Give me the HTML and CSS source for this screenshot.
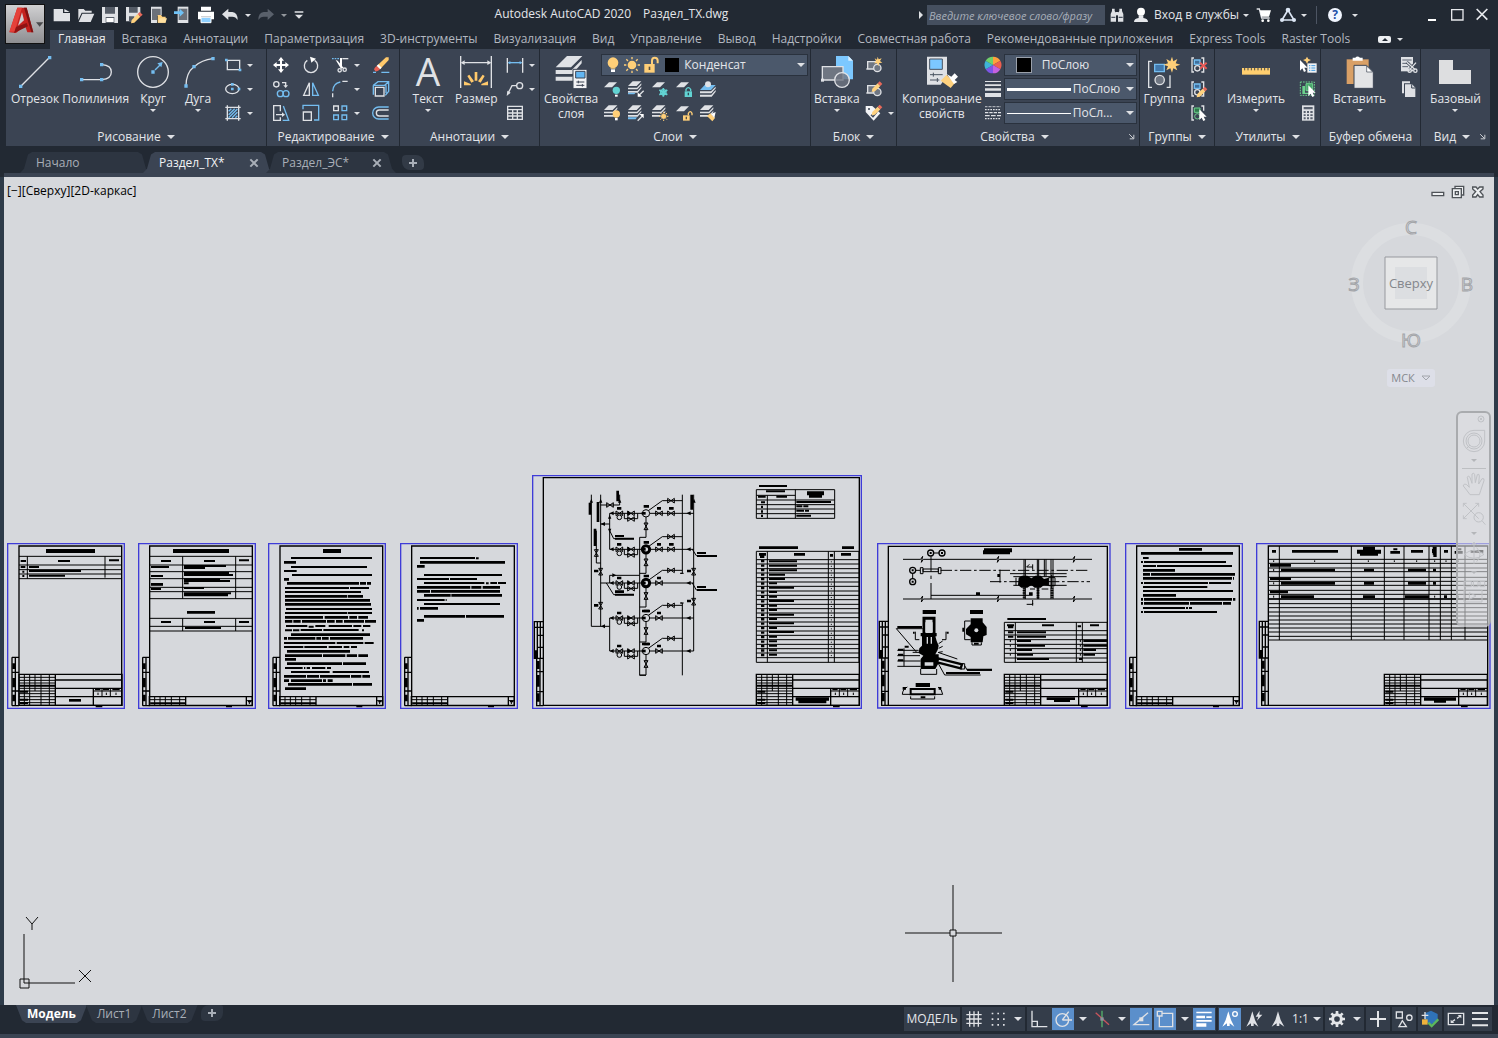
FILE: index.html
```html
<!DOCTYPE html>
<html lang="ru">
<head>
    <meta charset="UTF-8">
    <meta name="viewport" content="width=device-width, initial-scale=1.0">
    <title>Autodesk AutoCAD 2020 Раздел_ТХ.dwg</title>
    <link rel="stylesheet" href="styles.css">
</head>
<body>
    <!-- Shared shapes -->
    <svg class="defs" aria-hidden="true">
        <symbol id="plate" viewBox="0 0 54 54"><path class="fw" d="M3 22L18 7H42L27 22Z"/></symbol>
        <symbol id="stack" viewBox="0 0 54 54"><path class="fw" d="M3 18L17 4H43L29 18ZM3 23H30L43 10V15L31 28H3ZM3 33H31L43 20V25L32 38H3Z"/></symbol>
        <symbol id="cursor" viewBox="0 0 54 54"><path d="M28 16V48L35 41L40 51L46 48L41 38H50Z" fill="#fff"/></symbol>
        <symbol id="group" viewBox="0 0 54 54"><path class="lw" d="M12 6H6V48H12M34 6H41V48H34"/><path class="lb" fill="#3f6f9c" d="M13 12H30V25H13Z"/><circle class="lw" cx="22" cy="37" r="8"/></symbol>
        <symbol id="pencil" viewBox="0 0 54 54"><path fill="#ffd27f" d="M22 30L38 14L46 22L30 38L20 40Z"/><path fill="#e8695a" d="M38 14L44 8L52 16L46 22Z"/></symbol>
        <symbol id="block" viewBox="0 0 54 54"><path class="lw" fill="#6f7682" d="M8 17H38V39H8ZM4 39H10"/><circle class="lw" fill="#6f7682" cx="37" cy="36" r="11"/></symbol>
        <symbol id="title-block" overflow="visible">
            <path class="k4" d="M0 0H309V93H0ZM109 0V93M109 17H309M109 42H309M109 67H309M223 42V93"/>
            <path class="k3" d="M16 0V93M32 0V93M48 0V50M66 0V93M91 0V93M0 9H109M0 18H109M0 26H109M0 42H109M0 50H109M0 58H109M0 67H109M0 76H109M0 85H109M249 42V67M274 42V67M223 50H309M237 55V62M262 55V62M291 55V62"/>
            <path class="k6" d="M0 34H109M3 52H27M3 76H27M3 86H27M228 45H244M252 45H270M280 45H302M230 96H250"/>
        </symbol>
        <symbol id="strip" overflow="visible">
            <path class="k4" d="M0 0H309V27H0ZM109 0V27M291 0V27"/>
            <path class="k3" d="M16 0V27M32 0V27M48 0V27M66 0V27M91 0V27M0 9H109M0 19H109M291 12H309M300 12V22"/>
            <path class="k5" d="M3 20H109M296 14H306M230 29H248"/>
        </symbol>
        <symbol id="side-a4" overflow="visible">
            <path class="k4" d="M0 0H21M0 0V145M10 0V145M0 45H21M0 101H21M0 145H21"/>
            <path class="k8" d="M5 18V35M5 62V90M5 112V132"/>
        </symbol>
        <symbol id="side-a3" overflow="visible">
            <path class="k4" d="M27 0H0V110H27M9 0V110M18 0V110M0 17H27M9 41H27M9 77H27M7 110V252H27M17 110V252M7 150H27M7 210H27"/>
            <path class="k8" d="M5 86V110M12 118V142M12 160V195M12 215V240"/>
        </symbol>
        <symbol id="valve" overflow="visible"><path class="k3" d="M-10 -7V7L10 -7V7Z"/></symbol>
        <symbol id="valve-v" overflow="visible"><path class="k3" d="M-6 -10H6L-6 10H6Z"/></symbol>
        <symbol id="pump-line" overflow="visible">
            <path class="k3" d="M254 0H506M298 0V16H338V0M370 -8L412 -38H472M363 11V72H344"/>
            <path d="M254 0L266 -6V6ZM484 0L497 -6V6ZM308 -7V7L318 0Z"/>
            <circle class="k3" cx="283" cy="12" r="7"/><circle class="k3 bg" cx="363" cy="0" r="11"/><path d="M350 -4H362V4H350Z"/>
            <use href="#valve" x="283"/><use href="#valve" x="318"/><use href="#valve" x="318" y="17"/><use href="#valve" x="402"/><use href="#valve" x="438" y="-38"/><use href="#valve-v" x="363" y="39"/>
            <path class="k8" d="M276 -15H289M396 -15H408M356 -21H372"/>
        </symbol>
    </svg>

    <header class="app-header">
        <button class="app-button" aria-label="Меню приложения">
            <svg viewBox="0 0 114 114"><path d="M10 82L34 8H62L82 82H64L57 62L30 84Z" fill="#c5221f"/><path d="M34 8H48L26 80H10Z" fill="#e5413a"/><path d="M48 22L54 46L36 62Z" fill="#cfcfd1"/><path d="M30 66L62 54L66 64L24 84Z" fill="#8e1414"/><path d="M54 8H62L82 82H76Z" fill="#7f1212"/><path d="M90 52H112L101 65Z" fill="#4a4a4c"/></svg>
        </button>
        <div class="title-bar">
            <div class="quick-access">
                <button aria-label="Новый"><svg class="i" viewBox="0 0 54 54"><path class="fw" d="M2 9H30V21H51V46H2ZM34 9L50 18H34Z"/></svg></button>
                <button aria-label="Открыть"><svg class="i" viewBox="0 0 54 54"><path class="fw" d="M4 9H20L25 14H44V20H14L4 42ZM16 23H52L41 48H5Z"/></svg></button>
                <button aria-label="Сохранить"><svg class="i" viewBox="0 0 54 54"><path class="fw" d="M3 3H51V51H3Z"/><path d="M12 3H42V23H12ZM14 33H40V51H14Z" fill="#555c67"/><path d="M16 36H38V48H16Z" fill="#fff"/></svg></button>
                <button aria-label="Сохранить как"><svg class="i" viewBox="0 0 54 54"><path class="fw" d="M3 3H46V24L28 46H3Z"/><path d="M12 3H38V20H12ZM12 31H28V46H12Z" fill="#555c67"/><path fill="#ffd27f" d="M20 42L38 24L46 32L28 50L18 52Z"/><path fill="#e8695a" d="M38 24L44 18L53 26L46 32Z"/></svg></button>
                <button aria-label="Открыть из Web"><svg class="i" viewBox="0 0 54 54"><path class="fw" d="M6 2H38V28H24V51H6Z"/><path d="M9 8H35V28H24V42H9Z" fill="#6b7079"/><path d="M26 27H36L40 32H50V50H26Z" fill="#ffd27f"/><path d="M32 37H54L49 50H27Z" fill="#ffe0a0"/></svg></button>
                <button aria-label="Сохранить в Web"><svg class="i" viewBox="0 0 54 54"><path class="fw" d="M14 2H46V51H14Z"/><path d="M17 8H43V42H17Z" fill="#6b7079"/><path d="M3 16H20V8L33 20L20 32V24H3Z" fill="#6fc1f5"/></svg></button>
                <button aria-label="Печать"><svg class="i" viewBox="0 0 54 54"><path d="M12 2H42V14H12ZM3 17H51V40H42V32H12V40H3Z" fill="#fff"/><path d="M12 34H42V50H12Z" fill="#8fd0ff" stroke="#fff" stroke-width="3"/></svg></button>
                <button aria-label="Отменить"><svg class="i" viewBox="0 0 54 54"><path class="fw" d="M3 25L22 8V18H34Q50 20 50 42Q44 32 34 32H22V42Z"/></svg></button>
                <button class="slim" aria-label="Список отмены"><span class="caret"></span></button>
                <button aria-label="Повторить"><svg class="i" viewBox="0 0 54 54"><path fill="#59606b" d="M51 25L32 8V18H20Q4 20 4 42Q10 32 20 32H32V42Z"/></svg></button>
                <button class="slim dim" aria-label="Список повтора"><span class="caret"></span></button>
                <button class="slim" aria-label="Настройка панели"><svg class="i" viewBox="0 0 54 54"><path class="fw" d="M14 16H40V20H14ZM15 26H39L27 38Z"/></svg></button>
            </div>
            <div class="window-title"><span>Autodesk AutoCAD 2020</span><span>Раздел_ТХ.dwg</span></div>
            <form class="search">
                <button type="button" class="tiny" aria-label="Свернуть поиск"><span class="caret-right"></span></button>
                <input type="text" aria-label="Поиск" placeholder="Введите ключевое слово/фразу">
                <button type="button" aria-label="Найти"><svg class="i" viewBox="0 0 54 54"><path class="fw" d="M12 8H20V15L24 22V47H8V24L12 15ZM34 8H42V15L46 24V47H30V22L34 15Z"/><path class="fw" d="M22 18H32V28H22Z"/><path d="M10 34H22M32 34H44" stroke="#4c5462" stroke-width="4"/></svg></button>
            </form>
            <div class="account">
                <button class="sign-in"><svg class="i" viewBox="0 0 54 54"><circle cx="27" cy="17" r="12" fill="#fff"/><path d="M6 48Q6 38 20 36V28H34V36Q48 38 48 48Z" fill="#e6e8ec"/></svg>Вход в службы<span class="caret"></span></button>
                <button aria-label="App Store"><svg class="i" viewBox="0 0 54 54"><path class="lw" d="M5 9H13L20 36H44"/><path d="M14 13H48L42 32H19Z" fill="#fff"/><circle cx="23" cy="44" r="4" fill="#fff"/><circle cx="40" cy="44" r="4" fill="#fff"/></svg></button>
                <button class="with-caret" aria-label="Autodesk A360"><svg class="i" viewBox="0 0 54 54"><path d="M27 12L9 42H45Z" fill="none" stroke="#dce6f5" stroke-width="5"/><circle cx="27" cy="12" r="7" fill="#dce6f5"/><circle cx="9" cy="42" r="6" fill="#dce6f5"/><circle cx="45" cy="42" r="6" fill="#dce6f5"/></svg><span class="caret"></span></button>
                <span class="divider"></span>
                <button class="with-caret help" aria-label="Справка"><span class="help-mark">?</span><span class="caret"></span></button>
            </div>
            <div class="window-buttons">
                <button aria-label="Свернуть"><svg class="i" viewBox="0 0 54 54"><path d="M15 42H39" stroke="#fff" stroke-width="6"/></svg></button>
                <button aria-label="Развернуть"><svg class="i" viewBox="0 0 54 54"><path d="M11 11H45V42H11Z" fill="none" stroke="#e6e8ec" stroke-width="4"/></svg></button>
                <button aria-label="Закрыть"><svg class="i" viewBox="0 0 54 54"><path d="M11 9L43 41M43 9L11 41" stroke="#e6e8ec" stroke-width="5"/></svg></button>
            </div>
        </div>
        <nav class="ribbon-tabs">
            <a href="#" class="active">Главная</a>
            <a href="#">Вставка</a>
            <a href="#">Аннотации</a>
            <a href="#">Параметризация</a>
            <a href="#">3D-инструменты</a>
            <a href="#">Визуализация</a>
            <a href="#">Вид</a>
            <a href="#">Управление</a>
            <a href="#">Вывод</a>
            <a href="#">Надстройки</a>
            <a href="#">Совместная работа</a>
            <a href="#">Рекомендованные приложения</a>
            <a href="#">Express Tools</a>
            <a href="#">Raster Tools</a>
            <button aria-label="Свернуть ленту"><span class="fold"></span><span class="caret"></span></button>
        </nav>
    </header>

    <section class="ribbon">
        <div class="panel">
            <div class="panel-body draw">
                <button class="big"><svg viewBox="0 0 96 96"><path class="lw" d="M4 92L92 4"/><path class="fb" d="M0 86H10V96H0ZM87 0H97V10H87Z"/></svg>Отрезок</button>
                <button class="big"><svg viewBox="0 0 96 96"><path class="lw" d="M4 71H66Q94 68 94 48Q94 28 66 26"/><path class="fb" d="M0 66H10V76H0ZM60 66H70V76H60ZM60 21H70V31H60Z"/></svg>Полилиния</button>
                <button class="big"><svg viewBox="0 0 96 96"><circle class="lw" cx="48" cy="48" r="46"/><path class="fb" d="M43 43H53V53H43ZM77 18L73 34L61 22Z"/><path class="lb" d="M54 42L70 26"/></svg>Круг<span class="caret"></span></button>
                <button class="big"><svg viewBox="0 0 96 96"><path class="lw" d="M12 90Q12 50 36 32Q60 12 92 8"/><path class="fb" d="M7 85H17V95H7ZM31 27H41V37H31ZM88 3H98V13H88Z"/></svg>Дуга<span class="caret"></span></button>
                <div class="smalls one">
                    <button aria-label="Прямоугольник"><svg class="i" viewBox="0 0 54 54"><path class="lw" d="M10 13H47V41H10Z"/><path class="fb" d="M3 8H11V16H3ZM44 38H52V46H44Z"/></svg><span class="caret"></span></button>
                    <button aria-label="Эллипс"><svg class="i" viewBox="0 0 54 54"><ellipse class="lw" cx="25" cy="27" rx="20" ry="14"/><path class="fb" d="M21 23H29V31H21ZM41 23H49V31H41ZM21 9H29V17H21Z"/></svg><span class="caret"></span></button>
                    <button aria-label="Штриховка"><svg class="i" viewBox="0 0 54 54"><path class="lw" d="M4 10H50M4 44H50M10 4V50M44 4V50"/><path class="lb" d="M14 22L22 14M14 32L32 14M14 41L40 15M24 41L40 25M34 41L40 35"/></svg><span class="caret"></span></button>
                </div>
            </div>
            <div class="panel-title"><button>Рисование<span class="caret wide"></span></button></div>
        </div>

        <div class="panel">
            <div class="panel-body edit">
                <div class="smalls four">
                    <button aria-label="Перенести"><svg class="i" viewBox="0 0 54 54"><path d="M27 3L36 14H30V24H40V18L51 27L40 36V30H30V40H36L27 51L18 40H24V30H14V36L3 27L14 18V24H24V14H18Z" fill="#fff"/></svg></button>
                    <button aria-label="Повернуть"><svg class="i" viewBox="0 0 54 54"><path class="lw" d="M16 13A20 20 0 1 0 38 13"/><path d="M24 2L42 8L28 20Z" fill="#fff"/></svg></button>
                    <button aria-label="Обрезать"><svg class="i" viewBox="0 0 54 54"><path class="lb" stroke-dasharray="5 3" d="M3 8H24"/><path class="lw" d="M34 8H52"/><path d="M14 12L20 14L38 36L30 38ZM27 6H33V34L27 30Z" fill="#fff"/><circle class="lw" cx="26" cy="43" r="5"/><circle class="lw" cx="41" cy="41" r="5"/></svg><span class="caret"></span></button>
                    <button aria-label="Стереть"><svg class="i" viewBox="0 0 54 54"><path fill="#ffc96b" d="M14 30L42 4H50V12L24 40Z"/><path fill="#fff" d="M14 30L19 25L29 35L24 40Z"/><path fill="#ea6154" d="M6 40Q8 34 14 30L24 40Q18 47 10 46Z"/><path class="lb" d="M3 49H12M28 49H52"/></svg></button>
                    <button aria-label="Копировать"><svg class="i" viewBox="0 0 54 54"><circle class="lw" cx="13" cy="13" r="8"/><path class="lw" d="M30 8H41V18"/><path class="fw" d="M34 16H48L41 24Z"/><circle class="lb" cx="25" cy="41" r="9"/><circle class="lb" cx="42" cy="41" r="9"/></svg></button>
                    <button aria-label="Зеркало"><svg class="i" viewBox="0 0 54 54"><path class="lw" d="M22 8V46H5Z"/><path class="lb" d="M32 8V46H49Z"/></svg></button>
                    <button aria-label="Сопряжение"><svg class="i" viewBox="0 0 54 54"><path class="lb" d="M5 34Q6 10 28 6"/><path class="lw" d="M34 4H50M5 40V52"/></svg><span class="caret"></span></button>
                    <button aria-label="Расчленить"><svg class="i" viewBox="0 0 54 54"><path class="lw" d="M10 22H36V48H10Z"/><path class="lb" d="M4 16L18 5H50V34L40 46M4 16H38L50 5M42 16V40M4 16V44"/></svg></button>
                    <button aria-label="Растянуть"><svg class="i" viewBox="0 0 54 54"><path class="lw" d="M25 22V5H5V49H25V40M12 32H34"/><path class="fw" d="M30 25V39L39 32Z"/><path class="lb" d="M34 6L50 49H32"/></svg></button>
                    <button aria-label="Масштаб"><svg class="i" viewBox="0 0 54 54"><path class="lb" d="M3 16V4H50V48H36"/><path class="lw" d="M4 24H28V49H4Z"/></svg></button>
                    <button aria-label="Массив"><svg class="i" viewBox="0 0 54 54"><path class="lw" d="M8 6H22V20H8Z"/><path class="lb" d="M33 6H47V20H33ZM8 33H22V47H8ZM33 33H47V47H33Z"/></svg><span class="caret"></span></button>
                    <button aria-label="Подобие"><svg class="i" viewBox="0 0 54 54"><path class="lb" d="M50 9H20A17 17 0 0 0 20 45H50"/><path class="lw" d="M50 18H22A9 9 0 0 0 22 36H50"/></svg></button>
                </div>
            </div>
            <div class="panel-title"><button>Редактирование<span class="caret wide"></span></button></div>
        </div>

        <div class="panel">
            <div class="panel-body annot">
                <button class="big"><svg viewBox="0 0 96 96"><text x="48" y="90" class="big-letter">A</text></svg>Текст<span class="caret"></span></button>
                <button class="big"><svg viewBox="0 0 96 96"><path class="lw" d="M2 0V96M94 0V96M8 20H88"/><path class="fw" d="M2 20L14 13V27ZM94 20L82 13V27Z"/><path fill="#ffc96b" d="M44 74V48H52V74ZM28 56L42 76L34 80L22 60ZM68 56L54 76L62 80L74 60ZM12 76L32 84V88H12ZM84 76L64 84V88H84Z"/></svg>Размер</button>
                <div class="smalls one">
                    <button aria-label="Линейный размер"><svg class="i" viewBox="0 0 54 54"><path class="lw" d="M4 6V50M50 6V50"/><path class="lb" d="M8 20H46"/><path class="fb" d="M5 20L13 15V25ZM49 20L41 15V25Z"/></svg><span class="caret"></span></button>
                    <button aria-label="Выноска"><svg class="i" viewBox="0 0 54 54"><circle class="lw" cx="41" cy="17" r="9"/><path class="lw" d="M32 17H18L6 40"/><path class="fw" d="M2 48L4 32L14 38Z"/></svg><span class="caret"></span></button>
                    <button aria-label="Таблица"><svg class="i" viewBox="0 0 54 54"><path class="lw" d="M5 7H49V46H5ZM5 17H49M5 27H49M5 36H49M20 17V46M34 17V46"/></svg></button>
                </div>
            </div>
            <div class="panel-title"><button>Аннотации<span class="caret wide"></span></button></div>
        </div>

        <div class="panel">
            <div class="panel-body layers">
                <button class="big"><svg viewBox="0 0 96 96"><path class="fw" d="M2 34L36 0H82L48 34ZM2 42H50L80 12V22L52 54H2ZM2 62H52L66 48V58L54 74H2Z"/><path d="M54 40H96V98H54Z" fill="#f3f4f6" stroke="#3b4453" stroke-width="3"/><path d="M62 46H90V66H62Z" fill="#62b6f2" stroke="#3b4453" stroke-width="3"/><path d="M64 78H88M64 88H88M70 74V82M82 84V92" stroke="#3b4453" stroke-width="3"/></svg>Свойства<br>слоя</button>
                <div class="layer-tools">
                    <label class="combo layer-combo">
                        <svg class="i" viewBox="0 0 54 54"><circle cx="27" cy="20" r="16" fill="#ffcf78"/><path d="M20 34H34V38H20Z" fill="#ffcf78"/><path d="M21 40H33V48H21Z" fill="#fff"/></svg>
                        <svg class="i" viewBox="0 0 54 54"><circle cx="27" cy="27" r="13" fill="#ffcf78"/><path stroke="#ffcf78" stroke-width="4" d="M27 3V10M27 44V51M3 27H10M44 27H51M10 10L15 15M39 39L44 44M44 10L39 15M15 39L10 44"/></svg>
                        <svg class="i" viewBox="0 0 54 54"><path d="M7 24H38V50H7Z" fill="#ffcf78"/><path d="M30 24V14Q30 5 38 5Q47 5 47 14V22" fill="none" stroke="#ffcf78" stroke-width="6"/><path d="M20 32H25V42H20Z" fill="#5b5140"/></svg>
                        <span class="swatch"></span>
                        <select aria-label="Слой"><option>Конденсат</option></select><span class="caret wide"></span>
                    </label>
                    <div class="smalls five">
                        <button aria-label="Отключить"><svg class="i" viewBox="0 0 54 54"><use href="#plate"/><circle class="ft" cx="40" cy="31" r="11"/><path d="M36 44H44V50H36Z" fill="#fff"/></svg></button>
                        <button aria-label="Изолировать"><svg class="i" viewBox="0 0 54 54"><use href="#stack"/><path class="fb" d="M3 38H26L22 43H3Z"/><path class="lw" d="M50 32L36 46"/><path d="M32 50V37L45 50Z" fill="#fff"/></svg></button>
                        <button aria-label="Заморозить"><svg class="i" viewBox="0 0 54 54"><use href="#plate"/><path d="M37 24V50M25 30L49 44M49 30L25 44" stroke="#62d3d3" stroke-width="5"/><circle cx="37" cy="37" r="8" fill="none" stroke="#62d3d3" stroke-width="4"/></svg></button>
                        <button aria-label="Блокировать"><svg class="i" viewBox="0 0 54 54"><use href="#plate"/><path class="ft" d="M29 34H51V51H29Z"/><path d="M33 34V28Q40 18 47 28V34" fill="none" stroke="#62d3d3" stroke-width="4"/><path d="M38 38H42V46H38Z" fill="#2b4a55"/></svg></button>
                        <button aria-label="Сделать текущим"><svg class="i" viewBox="0 0 54 54"><path class="fb" d="M3 30L17 15H50L36 30Z"/><path class="fw" d="M3 34H36L50 20V25L37 40H3ZM3 44H37L50 30V35L38 50H3Z"/><circle class="fw" cx="27" cy="13" r="9"/></svg></button>
                        <button aria-label="Включить все слои"><svg class="i" viewBox="0 0 54 54"><use href="#stack"/><circle cx="40" cy="30" r="11" fill="#ffcf78"/><path d="M36 42H44V49H36Z" fill="#fff"/></svg></button>
                        <button aria-label="Отменить изоляцию"><svg class="i" viewBox="0 0 54 54"><use href="#stack"/><path class="fb" d="M3 40H30L26 46H3Z"/><path class="lw" d="M32 50L46 36"/><path d="M50 30V43L37 30Z" fill="#fff"/></svg></button>
                        <button aria-label="Разморозить все слои"><svg class="i" viewBox="0 0 54 54"><use href="#stack"/><circle cx="38" cy="37" r="9" fill="#ffcf78" stroke="#3b4453" stroke-width="2"/><path stroke="#ffcf78" stroke-width="3" d="M38 23V27M38 47V51M24 37H28M48 37H52M28 27L31 30M48 27L45 30M28 47L31 44M48 47L45 44"/></svg></button>
                        <button aria-label="Разблокировать"><svg class="i" viewBox="0 0 54 54"><use href="#plate"/><path fill="#ffcf78" d="M24 34H44V50H24Z"/><path d="M40 34V28Q46 18 51 28V34" fill="none" stroke="#ffcf78" stroke-width="4"/><path d="M32 38H36V46H32Z" fill="#5b5140"/></svg></button>
                        <button aria-label="Соответствие слоя"><svg class="i" viewBox="0 0 54 54"><use href="#stack"/><path fill="#ffcf78" d="M24 36L34 28L48 42L40 52Z"/><path d="M36 30L50 24L46 42Z" fill="#fff"/></svg></button>
                    </div>
                </div>
            </div>
            <div class="panel-title"><button>Слои<span class="caret wide"></span></button></div>
        </div>

        <div class="panel">
            <div class="panel-body blocks">
                <button class="big"><svg viewBox="0 0 96 96"><path d="M45 0H82L96 14V70H45Z" fill="#7cc8ff"/><path d="M82 0V14H96" fill="#d9efff"/><path class="lw" fill="#6f7682" d="M4 32H66V72H4Z"/><circle class="lw" fill="#6f7682" fill-opacity=".8" cx="63" cy="72" r="22"/><path class="fw" d="M0 68H9V77H0Z"/></svg>Вставка<span class="caret"></span></button>
                <div class="smalls one">
                    <button aria-label="Создать блок"><svg class="i" viewBox="0 0 54 54"><use href="#block"/><path fill="#ffcf78" d="M38 2L41 10L50 7L45 15L52 20L43 21L40 30L36 22L27 22L33 16L29 7L36 11Z"/></svg></button>
                    <button aria-label="Редактор блоков"><svg class="i" viewBox="0 0 54 54"><use href="#block"/><use href="#pencil" y="-4"/></svg></button>
                    <button aria-label="Атрибуты"><svg class="i" viewBox="0 0 54 54"><path fill="#f3f4f6" d="M2 6H22L46 28L26 50L2 24Z"/><circle cx="12" cy="15" r="3" fill="#3b4453"/><path d="M18 32L24 38L36 24" fill="none" stroke="#3b4453" stroke-width="4"/><use href="#pencil" y="-6"/></svg><span class="caret"></span></button>
                </div>
            </div>
            <div class="panel-title"><button>Блок<span class="caret wide"></span></button></div>
        </div>

        <div class="panel">
            <div class="panel-body props">
                <button class="big"><svg viewBox="0 0 96 96"><path class="fw" d="M3 2H63V60L44 86H3Z"/><path d="M11 9H49V40H11Z" fill="#7cc8ff" stroke="#4a5361" stroke-width="3"/><path d="M12 56H50M12 72H40M22 50V62M34 66V78" stroke="#4a5361" stroke-width="3"/><path fill="#ffd27f" d="M44 74L62 56L86 82L74 96Z"/><path d="M62 54L76 62L86 52L96 62L86 72L94 78L84 84Z" fill="#fff"/></svg>Копирование<br>свойств</button>
                <div class="prop-rows">
                    <div class="prop-row"><svg class="i" viewBox="0 0 54 54"><path d="M27 27V2A25 25 0 0 1 49 14.500Z" fill="#ff9f3c"/><path d="M27 27L49 14.500A25 25 0 0 1 49 39.500Z" fill="#ef5f4f"/><path d="M27 27L49 39.500A25 25 0 0 1 27 52Z" fill="#c561e0"/><path d="M27 27V52A25 25 0 0 1 5 39.500Z" fill="#7d55e6"/><path d="M27 27L5 39.500A25 25 0 0 1 5 14.500Z" fill="#3fb4d8"/><path d="M27 27L5 14.500A25 25 0 0 1 27 2Z" fill="#6fd06a"/></svg>
                        <label class="combo color-combo"><span class="swatch"></span><select aria-label="Цвет объекта"><option>ПоСлою</option></select><span class="caret wide"></span></label></div>
                    <div class="prop-row"><svg class="i" viewBox="0 0 54 54"><path class="fw" d="M3 3H51V6H3ZM3 13H51V18H3ZM3 25H51V32H3ZM3 39H51V51H3Z"/></svg>
                        <label class="combo line-combo"><span class="line thick"></span><select aria-label="Вес линий"><option>ПоСлою</option></select><span class="caret wide"></span></label></div>
                    <div class="prop-row"><svg class="i" viewBox="0 0 54 54"><path class="lw" stroke-dasharray="2 2" d="M3 8H51"/><path class="lw" stroke-dasharray="5 3" d="M3 17H51"/><path class="lw" stroke-dasharray="10 3" d="M3 26H51"/><path class="lw" stroke-dasharray="14 4" d="M3 35H51"/><path class="lw" stroke-dasharray="5 3" d="M3 44H51"/></svg>
                        <label class="combo line-combo"><span class="line"></span><select aria-label="Тип линий"><option>ПоСл...</option></select><span class="caret wide"></span></label></div>
                </div>
            </div>
            <div class="panel-title"><button>Свойства<span class="caret wide"></span></button><button class="launcher" aria-label="Палитра свойств"><svg viewBox="0 0 24 24"><path d="M4 4L18 18M20 6V20H6" fill="none" stroke="#dfe1e5" stroke-width="3"/></svg></button></div>
        </div>

        <div class="panel">
            <div class="panel-body groups">
                <button class="big"><svg viewBox="0 0 96 96"><path class="lw" d="M12 16H2V94H12M56 94H66V58"/><path class="lb" fill="#4279ad" d="M20 25H49V47H20Z"/><circle class="lw" fill="#6f7682" cx="35" cy="72" r="14"/><path fill="#ffcf78" d="M72 2L76 16L88 9L83 22L97 26L83 31L88 43L76 37L72 50L67 37L55 43L60 31L46 26L60 22L55 9L67 16Z"/></svg>Группа</button>
                <div class="smalls one">
                    <button aria-label="Разгруппировать"><svg class="i" viewBox="0 0 54 54"><use href="#group"/><path d="M30 20L50 38M50 20L30 38" stroke="#ea5a56" stroke-width="6"/></svg></button>
                    <button aria-label="Редактировать группу"><svg class="i" viewBox="0 0 54 54"><use href="#group"/><use href="#pencil" y="12"/></svg></button>
                    <button aria-label="Выбор групп"><svg class="i" viewBox="0 0 54 54"><path class="lw" d="M12 6H6V48H12M34 6H41V20"/><path d="M13 12H30V25H13Z" fill="#2f7a4c" stroke="#6cd08d" stroke-width="3"/><circle cx="22" cy="37" r="8" fill="none" stroke="#6cd08d" stroke-width="3"/><use href="#cursor"/></svg></button>
                </div>
            </div>
            <div class="panel-title"><button>Группы<span class="caret wide"></span></button></div>
        </div>

        <div class="panel">
            <div class="panel-body utils">
                <button class="big"><svg viewBox="0 0 96 96"><path fill="#ffcf6f" d="M6 36H90V56H6Z"/><path stroke="#4a4a48" stroke-width="3" d="M14 36V43M24 36V43M34 36V43M44 36V43M54 36V43M64 36V43M74 36V43M84 36V43"/></svg>Измерить<span class="caret"></span></button>
                <div class="smalls one">
                    <button aria-label="Быстрый выбор"><svg class="i" viewBox="0 0 54 54"><path fill="#ffcf78" d="M24 2L28 9L36 12L28 16L24 23L20 16L12 12L20 9Z"/><path d="M3 12V44L10 37L15 48L21 45L16 35H26Z" fill="#fff"/><path d="M25 22H53V50H25Z" fill="#f3f4f6"/><path d="M30 29H34M37 29H49M30 36H34M37 36H49M30 43H34M37 43H49" stroke="#3e9be0" stroke-width="3"/></svg></button>
                    <button aria-label="Выбрать всё"><svg class="i" viewBox="0 0 54 54"><path d="M4 6H46V46H4Z" fill="none" stroke="#6cd08d" stroke-width="3" stroke-dasharray="5 3"/><path d="M10 18H18V38H34V42H10Z" fill="#6cd08d"/><path d="M21 11H41V32H21Z" fill="#4aa56b" stroke="#6cd08d" stroke-width="3"/><use href="#cursor"/></svg></button>
                    <button aria-label="Калькулятор"><svg class="i" viewBox="0 0 54 54"><path class="fw" d="M9 4H46V50H9Z"/><path d="M14 9H41V16H14ZM14 21H20V27H14ZM24 21H30V27H24ZM34 21H41V27H34ZM14 31H20V36H14ZM24 31H30V36H24ZM34 31H41V36H34ZM14 40H20V46H14ZM24 40H30V46H24ZM34 40H41V46H34Z" fill="#5a6270"/></svg></button>
                </div>
            </div>
            <div class="panel-title"><button>Утилиты<span class="caret wide"></span></button></div>
        </div>

        <div class="panel">
            <div class="panel-body clip">
                <button class="big"><svg viewBox="0 0 96 96"><path fill="#d9a066" d="M8 10H74V84H8Z"/><path d="M26 14V5H34Q40 -2 48 5H56V14Z" fill="#fff"/><path d="M30 28H68L88 48V97H30Z" fill="#e3e4e6" stroke="#3b4453" stroke-width="3"/><path d="M68 30V48H86Z" fill="#fff" stroke="#3b4453" stroke-width="2"/></svg>Вставить<span class="caret"></span></button>
                <div class="smalls one">
                    <button aria-label="Вырезать"><svg class="i" viewBox="0 0 54 54"><path class="fw" d="M3 3H39V46H3Z"/><path d="M7 12H35M7 22H30M7 32H24" stroke="#5a6270" stroke-width="3"/><path d="M20 18L46 42M46 22L28 42" stroke="#3b4453" stroke-width="9"/><path class="lw" d="M20 18L44 40M48 20L30 40"/><circle class="lw" cx="29" cy="44" r="5"/><circle class="lw" cx="46" cy="44" r="5"/></svg></button>
                    <button aria-label="Копировать в буфер"><svg class="i" viewBox="0 0 54 54"><path class="fw" d="M6 4H30V10H12V40H6Z"/><path class="fw" d="M15 13H36L46 23V51H15Z"/><path d="M35 13V24H46" fill="none" stroke="#3b4453" stroke-width="3"/></svg></button>
                </div>
            </div>
            <div class="panel-title"><span>Буфер обмена</span></div>
        </div>

        <div class="panel">
            <div class="panel-body view">
                <button class="big"><svg viewBox="0 0 96 96"><path fill="#dddee0" d="M0 12H42V42H96V84H0Z"/></svg>Базовый<span class="caret"></span></button>
            </div>
            <div class="panel-title"><button>Вид<span class="caret wide"></span></button><button class="launcher" aria-label="Параметры вида"><svg viewBox="0 0 24 24"><path d="M4 4L18 18M20 6V20H6" fill="none" stroke="#dfe1e5" stroke-width="3"/></svg></button></div>
        </div>
    </section>

    <nav class="file-tabs">
        <div class="file-tab"><a href="#">Начало</a></div>
        <div class="file-tab active"><a href="#">Раздел_ТХ*</a><button aria-label="Закрыть Раздел_ТХ"><svg viewBox="0 0 30 30"><path d="M4 4L26 26M26 4L4 26"/></svg></button></div>
        <div class="file-tab"><a href="#">Раздел_ЭС*</a><button aria-label="Закрыть Раздел_ЭС"><svg viewBox="0 0 30 30"><path d="M4 4L26 26M26 4L4 26"/></svg></button></div>
        <button class="add-tab" aria-label="Новый чертеж"><svg viewBox="0 0 30 30"><path d="M15 3V27M3 15H27"/></svg></button>
    </nav>

    <main class="viewport">
        <svg class="model">
            <!-- Sheets, left to right -->
            <svg x="3" y="366" width="118" height="166" viewBox="21 39 354 498">
                <path class="frame" d="M23 41H373V535H23Z"/><path class="k4" d="M57 48H365V526H57Z"/>
                <path class="k3" d="M57 79H365M57 105H365M57 119H365M57 132H365M57 146H365M82 79V146M315 79V143"/>
                <path class="k12" d="M138 63H285"/>
                <path class="k6" d="M62 93H78M174 93H210M327 91H357M62 111H76M87 111H117M87 123H243M87 137H195M70 122V128M70 135V141"/>
                <path class="k8" d="M207 511H243"/>
                <use href="#title-block" x="57" y="433"/><use href="#side-a4" x="36" y="382"/>
            </svg>
            <svg x="134" y="366" width="118" height="166" viewBox="414 39 354 498">
                <path class="frame" d="M416 41H766V535H416Z"/><path class="k4" d="M449 48H757V526H449Z"/>
                <path class="k3" d="M449 79H757M449 105H757M449 125H757M449 146H757M449 172H757M449 185H757M449 206H757M548 79V206M707 79V206M449 265H757M449 289H757M449 303H757M548 265V303M707 265V303"/>
                <path class="k12" d="M519 63H687"/>
                <path class="k6" d="M483 93H513M612 93H645M717 91H747M453 111H507M552 108H678M552 114H615M552 129H687M552 135H699M453 138H489M552 148H660M552 153H690M552 160H566M453 163H489M453 177H483M552 174H612M552 190H693M552 196H684M483 276H513M612 276H645M717 276H747M555 294H663"/>
                <path class="k8" d="M561 247H645M555 131H630M636 131H687M453 163H489"/>
                <use href="#strip" x="448" y="500"/><use href="#side-a4" x="428" y="382"/>
            </svg>
            <svg x="264" y="366" width="118" height="166" viewBox="18 39 354 498">
                <path class="frame" d="M20 41H370V535H20Z"/><path class="k4" d="M54 48H362V526H54Z"/>
                <path class="k12" d="M183 63H237"/>
                <path class="k6" d="M87 84H330M87 111H315M66 123H104M90 135H330M69 174H261M264 174H321M69 186H297M72 237H330M69 249H256M258 249H330M72 288H136M140 290H155M160 288H190M200 288H270M274 288H298M303 288H325M69 301H90M93 301H112M116 300H180M184 300H290M300 301H306M66 339H220M224 339H304M308 339H335M66 351H124M127 351H195M200 351H240M245 351H262M267 351H285M69 414H122M126 414H130M134 414H144M150 414H190M195 414H207M87 426H203M212 426H321"/>
                <path class="k8" d="M66 97H102M66 148H81M75 160H291M294 160H312M315 160H327M69 199H256M258 199H303M69 211H324M69 223H327M69 262H183M188 262H258M262 262H285M289 262H318M69 274H91M94 274H116M120 274H192M195 274H218M222 274H242M246 274H306M309 274H342M87 314H324M66 325H75M78 325H160M163 325H177M180 325H200M204 325H303M75 364H264M69 377H180M183 377H250M254 377H285M289 377H318M69 388H102M75 401H240M243 401H312M66 439H132M135 439H171M174 439H264M267 439H298M301 439H324M66 452H81M87 452H180M183 452H192M197 452H212M78 463H270M273 463H330M69 476H132"/>
                <use href="#strip" x="53" y="500"/><use href="#side-a4" x="33" y="382"/>
            </svg>
            <svg x="396" y="366" width="118" height="166" viewBox="414 39 354 498">
                <path class="frame" d="M416 41H766V535H416Z"/><path class="k4" d="M449 48H757V526H449Z"/>
                <path class="k6" d="M474 84H639M642 85H650M486 135H720M465 147H561M564 147H645M486 159H667M672 160H680M685 159H705M708 159H732M465 210H548M551 210H554M486 222H714"/>
                <path class="k8" d="M474 97H729M465 109H488M465 172H625M628 172H658M662 172H714M465 184H504M507 184H714M486 196H566M568 196H720M465 235H470M474 235H528M486 259H609M612 259H726M465 271H486"/>
                <use href="#strip" x="448" y="500"/><use href="#side-a4" x="428" y="382"/>
            </svg>
            <!-- Process flow diagram -->
            <svg x="528" y="298" width="330" height="234" viewBox="21 21 990 702">
                <path class="frame" d="M23 23H1009V721H23Z"/><path class="k4" d="M55 29H1003V712H55Z"/>
                <path class="k3" d="M199 80V475H254M227 80V475M472 80V316H466M476 316H466M472 622V405H466M476 405H466M506 80V549M344 208V622H363M254 136V244M254 450V549M344 322H254V345M227 345H254M214 188V285H227M227 111H284V80M227 168H254M254 188L266 212H327M244 345L266 380H327M502 244L514 263H576M502 345L514 366H576"/>
                <path d="M227 168L240 162V174ZM228 475L240 469V481ZM274 322L262 316V328ZM222 104L227 92L232 104ZM194 104L199 92L204 104ZM279 104L284 92L289 104ZM502 104L507 92L512 104ZM249 152L254 140L259 152ZM249 182L254 194L259 182Z"/>
                <path class="k8" d="M278 68V100M195 104V140M219 102V162M210 182V234M500 80V125M207 309H220M207 412H220M486 309H498M486 399H498M270 371H297"/>
                <path class="k6" d="M270 204H297M270 380H327M516 255H543M516 357H543M516 366H576M516 264H576M270 212H327"/>
                <use href="#pump-line" y="136"/><use href="#pump-line" y="244"/><use href="#pump-line" y="345"/><use href="#pump-line" y="450"/><use href="#pump-line" y="549"/>
                <use href="#valve" x="438" y="136"/><use href="#valve" x="438" y="244"/><use href="#valve" x="255" y="111"/>
                <use href="#valve-v" x="214" y="255"/><use href="#valve-v" x="227" y="311"/><use href="#valve-v" x="227" y="413"/><use href="#valve-v" x="506" y="311"/><use href="#valve-v" x="506" y="401"/>
                <circle cx="363" cy="244" r="11" fill="none" stroke="#000" stroke-width="9"/><circle cx="363" cy="345" r="11" fill="none" stroke="#000" stroke-width="9"/>
                <path class="k8" d="M432 121H446M432 229H446M351 429H375M351 528H375"/>
                <path class="k3" d="M694 65H929V151H694ZM694 82H811M694 96H929M694 110H929M694 123H929M694 137H929M727 82V151M811 65V151"/>
                <path class="k6" d="M702 54H786M723 70H780M699 86H722M754 86H786M708 103H720M814 102H918M814 115H832M835 115H850M814 128H837M840 128H852M814 143H858M711 113V120M711 127V134M711 140V147"/>
                <path class="k12" d="M846 76H897M852 83H891"/>
                <path class="k3" d="M694 250H1002V583H694ZM727 250V583M910 250V583M928 250V583M694 275H1002M694 288H1002M694 302H1002M694 315H1002M694 329H1002M694 342H1002M694 355H1002M694 369H1002M694 382H1002M694 395H1002M694 409H1002M694 422H1002M694 435H1002M694 449H1002M694 462H1002M694 475H1002M694 489H1002M694 502H1002M694 515H1002M694 529H1002M694 542H1002M694 555H1002M694 569H1002"/>
                <path class="k8" d="M702 239H819M951 239H987M702 259H723M807 259H840M948 259H978M915 262H924M705 266H718"/>
                <path class="k6" d="M732 280H816M732 293H816M732 307H816M732 320H780M732 333H780M732 346H756M732 359H807M732 372H756M732 386H756M732 399H807M732 413H756M732 426H756M732 440H807M732 453H756M732 466H807M732 480H756M732 492H807M732 506H756M732 520H756M732 533H756M732 547H756M732 560H756"/>
                <path d="M713 276V565" stroke="#000" stroke-width="10" stroke-dasharray="7 6.400"/><path d="M919 280V570" stroke="#000" stroke-width="3" stroke-dasharray="3 10.400"/>
                <use href="#title-block" x="694" y="619"/><use href="#side-a3" x="28" y="461"/>
                <path d="M812 688H912V698H904V706H820V698H812Z"/>
            </svg>
            <!-- Equipment layout -->
            <svg x="873" y="366" width="234" height="166" viewBox="21 24 702 498">
                <path class="frame" d="M23 26H720V519H23Z"/><path class="k4" d="M55 34H712V511H55Z"/>
                <path class="k3" d="M99 73H152L158 64L154 82L160 73H380L386 64L382 82L388 73H608L614 64L610 82L616 73H666M99 192H152L158 183L154 201L160 192H380L386 183L382 201L388 192H608L614 183L610 201L616 192H666M183 64V110M183 122V132M183 144V192M183 181H488M390 104V143M136 106H150M128 114V132M190 54H208M462 73V192M466 73V192M502 73V192M506 73V192M523 73V125M528 73V125M543 73V192M549 73V192M420 116H590M430 125H590M430 151H590"/>
                <path class="k3" stroke-dasharray="34 8 8 8" d="M212 106H660M360 140H660"/>
                <path class="k3" d="M151 98H159V116H151ZM205 98H213V116H205ZM159 102H205V110H159Z"/>
                <circle class="k4" cx="182" cy="54" r="9"/><circle class="k4" cx="216" cy="54" r="9"/><circle class="k4" cx="128" cy="106" r="9"/><circle class="k4" cx="128" cy="140" r="9"/>
                <path d="M179 51H185V57H179ZM213 51H219V57H213ZM125 103H131V109H125ZM125 137H131V143H125Z"/>
                <path class="k12" d="M342 46H426M339 52H420"/><path class="k8" d="M318 176H330M477 176H488M386 117V126"/><path class="k3" d="M470 96H488V88M488 104V96M470 208H488V195M488 212V204M478 88L470 96"/>
                <path d="M446 128L456 122H472L484 130L496 122H512L522 132L536 128V152L522 150L512 158H494L484 150L472 158H454L444 150Z"/>
                <path class="k3" d="M536 128H555V152H536ZM438 128V152M545 120V160M480 162H495M515 162H535"/>
                <path class="k8" stroke-dasharray="3 2" d="M462 160V190M504 160V190M546 160V190"/>
                <!-- Section view -->
                <path d="M162 250H192V300H162Z" fill="none" stroke="#000" stroke-width="9"/>
                <path d="M152 294H200V304H196L200 318L206 332L203 345L196 358H206V384L196 402H152V372L160 362L146 354L148 340L156 332V304H152Z"/>
                <path fill="#d6d8dc" d="M164 382H190V392H164ZM166 262H188V292H166ZM170 306H174V326H170ZM182 306H186V326H182Z"/>
                <path d="M204 370L276 388L272 400L202 382Z" fill="#d6d8dc" stroke="#000" stroke-width="7"/><path class="k3" d="M276 386H284V402H272M152 402V418H200V402M79 281L140 352M79 281H158M82 346H146M82 362H150M82 378H152M82 394H152M102 340V394M136 290V314H148M228 290V314H216M128 352H148M262 372L204 352M284 392L292 406H366M204 384L224 420H332M206 326L218 318M206 340L218 334M206 352L218 350"/>
                <path class="k6" d="M82 276H156M84 344H100M84 359H100M84 376H100M228 414H330M291 404H366M129 293H134M230 293H236M104 335H116"/>
                <path class="k12" d="M158 231H198M300 231H339M137 450H180"/>
                <path d="M302 250H338V262L350 276V300L340 304L338 322H302V306L288 298V282L302 268Z"/><circle cx="319" cy="286" r="6" fill="#d6d8dc"/>
                <path class="k3" d="M302 258H284V314H302M306 322V330H334V322"/><path class="k6" d="M280 278V290M312 326H326M152 487H166"/>
                <path class="k3" d="M97 478H218M122 484V492H194V484M97 478Q98 462 112 456M218 478Q216 462 204 456"/><path d="M122 462H194V478H122Z" fill="#d6d8dc" stroke="#000" stroke-width="6"/><path class="k8" d="M98 460H108M206 460H214"/>
                <path class="k3" d="M403 262H712V382H403ZM436 262V382M619 262V382M637 262V382M403 287H712M403 300H712M403 314H712M403 328H712M403 341H712M403 355H712M403 369H712"/>
                <path class="k6" d="M412 252H528M411 271H432M516 271H552M660 271H687M623 274H633M414 277H430M414 292H430M414 305H430M441 292H528M441 305H528M441 318H483M441 332H525M441 345H486M441 359H489M441 372H537M640 318H712M640 332H712M640 345H678M640 359H675M627 372H636"/>
                <path class="k3" d="M421 315V321M421 329V335M421 342V348M421 356V362M631 315V321M631 329V335M631 342V348M631 356V362"/>
                <use href="#title-block" x="403" y="418"/><use href="#side-a3" x="28" y="259"/>
                <path d="M530 487H615V495H600V501H552V495H530Z"/>
            </svg>
            <svg x="1121" y="366" width="118" height="166" viewBox="21 429 354 498">
                <path class="frame" d="M23 431H373V925H23Z"/><path class="k4" d="M56 438H364V916H56Z"/>
                <path class="k6" d="M75 474H92M69 486H75M78 486H324M75 498H114M117 498H342M69 549H75M78 549H270M273 549H339M75 561H268M75 573H345M75 624H201M204 624H210M213 624H222M69 636H75M78 636H297"/>
                <path class="k8" d="M183 448H252M69 460H345M75 511H171M75 523H96M99 523H351M75 535H342M345 535H348M75 586H174M69 598H75M78 598H342M345 598H352M69 610H75M78 610H213M216 610H312M315 610H339"/>
                <use href="#strip" x="55" y="890"/><use href="#side-a4" x="35" y="772"/>
            </svg>
            <!-- Specification -->
            <svg x="1252" y="366" width="235" height="166" viewBox="414 429 705 498">
                <path class="frame" d="M416 431H1116V925H416Z"/><path class="k4" d="M451 438H1109V916H451Z"/>
                <path class="k3" d="M484 438V720M700 438V720M799 438V720M858 438V720M933 438V720M967 438V720M1000 438V720M1041 438V720M451 478H1109M451 490H1109M451 504H1109M451 515H1109M451 532H1109M451 544H1109M451 556H1109M451 571H1109M451 583H1109M451 596H1109"/>
                <path class="k3" d="M451 598H1109M451 611H1109M451 623H1109M451 636H1109M451 648H1109M451 660H1109M451 672H1109M451 684H1109M451 696H1109M451 709H1109M451 720H1109"/>
                <path class="k8" d="M462 454H474M522 454H660M879 454H915M978 454H990M1058 454H1096M456 496H519M456 536H519M456 576H510M489 510H651M489 550H651M489 590H588M738 510H768M738 550H768M735 590H771M870 510H924M870 550H924M861 590H933M945 550H954M945 510H954M978 590H987M817 457H846M1010 457H1034"/>
                <path class="k12" d="M717 455H789M735 446H771M726 461H780M944 446H956M942 453H956M946 465H956M944 458H956"/><path class="k6" d="M826 448H838M1016 448H1030"/>
                <path class="k3" d="M467 481V486M590 481V486M751 481V486M829 481V486M896 481V486M950 481V486M984 481V486M1020 481V486M467 507V513M467 547V553M467 587V593M950 587V593M1020 587V593"/>
                <use href="#title-block" x="799" y="823"/><use href="#side-a3" x="424" y="664"/>
                <path d="M918 892H1014V902H984V908H948V902H918Z"/>
            </svg>
        </svg>

        <div class="view-labels"><button>[−]</button><button>[Сверху]</button><button>[2D-каркас]</button></div>

        <div class="view-window-buttons">
            <button aria-label="Свернуть вид"><svg viewBox="0 0 42 42"><path d="M3 22H38V32H3Z"/></svg></button>
            <button aria-label="Восстановить вид"><svg viewBox="0 0 42 42"><path d="M12 4H38V30H12Z"/><path d="M4 11H31V38H4Z"/><path d="M13 20H22V29H13Z"/></svg></button>
            <button aria-label="Закрыть вид"><svg viewBox="0 0 42 42"><path d="M5 6H15L20 12L26 6H36V12L27 20L36 30V36H26L20 29L15 36H5V30L14 20L5 12Z"/></svg></button>
        </div>

        <div class="view-cube">
            <svg viewBox="0 0 128 140">
                <circle cx="64" cy="72" r="54" fill="none" stroke="#dcdee1" stroke-width="12"/>
                <path d="M38 46H90V98H38Z" fill="#e6e7e8" stroke="#97999e" stroke-width="1"/><path d="M48 56H80V88H48Z" fill="#dcdee1"/>
                <text class="face" x="64" y="77">Сверху</text>
                <text class="side" x="64" y="23">С</text><text class="side" x="7" y="80">З</text><text class="side" x="120" y="80">В</text><text class="side" x="64" y="136">Ю</text>
            </svg>
            <button class="ucs-menu">МСК<svg viewBox="0 0 30 18"><path d="M3 3H27L15 15Z"/></svg></button>
        </div>

        <div class="nav-bar">
            <svg class="nav-close" viewBox="0 0 24 24"><circle cx="12" cy="12" r="9"/><path d="M8 8L16 16M16 8L8 16"/></svg>
            <button aria-label="Штурвал"><svg viewBox="0 0 72 72"><path d="M36 4H68V36A32 32 0 1 1 36 4Z"/><circle cx="36" cy="36" r="18"/><circle cx="36" cy="36" r="24"/><path d="M24 48L14 58"/></svg></button>
            <span class="caret"></span>
            <button class="pan" aria-label="Панорамирование"><svg viewBox="0 0 72 72"><path d="M24 68Q14 54 4 42Q4 34 14 38L22 46L16 16Q18 8 24 16L30 34L30 6Q36 0 38 8L40 32L46 8Q52 4 52 12L50 36L60 20Q68 18 66 26L56 56L52 68Z"/></svg></button>
            <button aria-label="Зумирование"><svg viewBox="0 0 72 72"><path d="M4 4L50 50M50 4L4 50M4 14V4H14M40 4H50V14M4 40V50H14"/><circle cx="50" cy="46" r="14"/><path d="M60 56L70 68"/></svg></button>
            <span class="caret"></span>
            <button aria-label="Орбита"><svg viewBox="0 0 72 72"><path d="M36 4V68M6 40Q36 16 66 40Q36 64 6 40M28 12L36 4L44 12M44 20Q64 40 44 62"/></svg></button>
            <span class="caret"></span>
            <button aria-label="ShowMotion"><svg viewBox="0 0 72 72"><path d="M6 4H28V20H6ZM34 4H48V20H34ZM54 4H68V20H54ZM6 30H60V66H6ZM22 38V58L42 48Z"/></svg></button>
        </div>

        <svg class="ucs-icon" viewBox="0 0 72 72" aria-label="ПСК"><path d="M5 16V65H56M1 61H10V70H1ZM7 -1L13 6L19 -1M13 6V12M60 52L72 64M72 52L60 64"/></svg>
        <svg class="crosshair" viewBox="0 0 98 98"><path d="M49 1V98M1 49H98"/><path d="M46 46H52V52H46Z" fill="#d6d8dc"/></svg>
    </main>

    <footer class="status">
        <nav class="layout-tabs">
            <a href="#" class="active">Модель</a>
            <a href="#">Лист1</a>
            <a href="#">Лист2</a>
            <button aria-label="Новый лист"><svg viewBox="0 0 30 30"><path d="M15 3V27M3 15H27"/></svg></button>
        </nav>
        <div class="status-tools">
            <div class="seg"><button class="space">МОДЕЛЬ</button></div>
            <div class="seg">
                <button aria-label="Сетка"><svg class="i" viewBox="0 0 54 54"><path class="lw" d="M14 4V50M27 4V50M40 4V50M4 14H50M4 27H50M4 40H50"/></svg></button>
                <button aria-label="Шаг"><svg class="i" viewBox="0 0 54 54"><path class="fw" d="M8 8H13V13H8ZM25 8H30V13H25ZM42 8H47V13H42ZM8 25H13V30H8ZM25 25H30V30H25ZM42 25H47V30H42ZM8 42H13V47H8ZM25 42H30V47H25ZM42 42H47V47H42Z"/></svg></button>
                <button class="drop" aria-label="Параметры шага"><span class="caret wide"></span></button>
            </div>
            <div class="seg">
                <button aria-label="Орто"><svg class="i" viewBox="0 0 54 54"><path class="lw" d="M6 2V50H52M6 34H22V50"/></svg></button>
                <button class="on" aria-label="Полярное отслеживание"><svg class="i" viewBox="0 0 54 54"><circle class="lw" cx="25" cy="30" r="19"/><path class="lw" d="M25 30H54M25 30L44 5"/></svg></button>
                <button class="drop" aria-label="Параметры отслеживания"><span class="caret wide"></span></button>
                <button aria-label="Изометрия"><svg class="i" viewBox="0 0 54 54"><path d="M27 2V52" stroke="#55b36b" stroke-width="4"/><path d="M8 8L48 44" stroke="#c9555c" stroke-width="4"/><path d="M22 22H32V32H22Z" fill="#8c949f"/></svg></button>
                <button class="drop" aria-label="Изометрические плоскости"><span class="caret wide"></span></button>
                <button class="on" aria-label="Объектное отслеживание"><svg class="i" viewBox="0 0 54 54"><path class="lw" d="M48 8L6 44H52"/><path class="fw" d="M22 22H34V34H22Z"/></svg></button>
                <button class="on" aria-label="Объектная привязка"><svg class="i" viewBox="0 0 54 54"><path class="lw" d="M10 20V50H50V10H20M4 4H18V18H4Z"/></svg></button>
                <button class="drop" aria-label="Параметры привязки"><span class="caret wide"></span></button>
                <button class="on" aria-label="Вес линий"><svg class="i" viewBox="0 0 54 54"><path fill="#fff" d="M4 5H50V10H4ZM4 17H30V25H4ZM34 19H50V24H34ZM4 30H50V35H4ZM4 40H34V50H4Z"/></svg></button>
            </div>
            <div class="seg">
                <button class="on" aria-label="Показать аннотации"><svg class="i" viewBox="0 0 54 54"><path d="M22 4L30 30L40 50L26 40V48H18V40L4 50L14 30Z" fill="#fff"/><circle cx="42" cy="12" r="7" fill="none" stroke="#fff" stroke-width="4"/></svg></button>
                <button aria-label="Автомасштаб"><svg class="i" viewBox="0 0 54 54"><path class="fw" d="M22 4L30 30L40 50L26 40V48H18V40L4 50L14 30ZM44 2L32 20H40L36 32L52 14H43Z"/></svg></button>
                <button aria-label="Масштаб аннотаций"><svg class="i" viewBox="0 0 54 54"><path class="fw" d="M27 4L35 30L46 50L31 40V48H23V40L8 50L19 30Z"/></svg></button>
                <button class="scale">1:1<span class="caret wide"></span></button>
            </div>
            <div class="seg">
                <button aria-label="Рабочее пространство"><svg class="i" viewBox="0 0 54 54"><circle cx="27" cy="27" r="13" fill="none" stroke="#e3e5e8" stroke-width="9"/><path stroke="#e3e5e8" stroke-width="8" d="M27 3V13M27 41V51M3 27H13M41 27H51M10 10L17 17M37 37L44 44M44 10L37 17M17 37L10 44"/></svg></button>
                <button class="drop" aria-label="Список пространств"><span class="caret wide"></span></button>
            </div>
            <div class="seg"><button aria-label="Монитор аннотаций"><svg class="i" viewBox="0 0 54 54"><path stroke="#e3e5e8" stroke-width="6" d="M27 3V51M3 27H51"/></svg></button></div>
            <div class="seg"><button aria-label="Изолировать объекты"><svg class="i" viewBox="0 0 54 54"><path class="lw" d="M4 6H22V24H4ZM22 32L34 50H12Z"/><circle class="lw" cx="43" cy="23" r="8"/></svg></button></div>
            <div class="seg"><button aria-label="Аппаратное ускорение"><svg class="i" viewBox="0 0 54 54"><path d="M12 10L30 2L50 12V34L28 44L12 34Z" fill="#2f73b8"/><path class="lw" d="M2 16H22M12 6V28"/><path d="M3 28H20V44H3Z" fill="#f0b23c"/><path d="M22 38L32 48L52 28" fill="none" stroke="#5cb85c" stroke-width="7"/></svg></button></div>
            <div class="seg">
                <button aria-label="Очистить экран"><svg class="i" viewBox="0 0 54 54"><path class="lw" d="M4 10H50V44H4ZM30 25L40 18M24 29L14 36"/><path class="fw" d="M32 15H43V25ZM22 39H11V29Z"/></svg></button>
                <button aria-label="Адаптация"><svg class="i" viewBox="0 0 54 54"><path stroke="#e3e5e8" stroke-width="6" d="M3 9H51M3 27H51M3 46H51"/></svg></button>
            </div>
        </div>
    </footer>
</body>
</html>
```

FILE: styles.css
```css
* {
    box-sizing: border-box;
}
body {
    margin: 0;
    height: 100vh;
    display: flex;
    flex-direction: column;
    background-color: #222933;
    color: #e4e6ea;
    font-family: "Open Sans", "Noto Sans", sans-serif;
    font-size: 12px;
    line-height: 16px;
    overflow: hidden;
    border-bottom: 4px solid #3b4453;
}
button, input, select {
    font: inherit;
    color: inherit;
    background: none;
    border: none;
    padding: 0;
    margin: 0;
}
button {
    display: flex;
    align-items: center;
    justify-content: center;
    white-space: nowrap;
}
a {
    color: inherit;
    text-decoration: none;
    white-space: nowrap;
}
svg {
    display: block;
    flex: none;
}
.defs {
    position: absolute;
    width: 0;
    height: 0;
}

/* Icon strokes and fills */
.i {
    width: 18px;
    height: 18px;
}
.lw, .lb {
    stroke: #dfe1e5;
    stroke-width: 4;
}
.lb {
    stroke: #74bdf0;
}
.lw:not([fill]), .lb:not([fill]) {
    fill: none;
}
.fw { fill: #dfe1e5; }
.fb { fill: #74bdf0; }
.ft { fill: #62d3d3; }
.caret {
    flex: none;
    border: 3px solid transparent;
    border-top-color: #dfe1e5;
    border-bottom: none;
}
.caret.wide {
    border-width: 4px;
    border-bottom: none;
}
.caret-right {
    border: 4px solid transparent;
    border-left-color: #dfe1e5;
    border-right: none;
}

/* Title bar and ribbon tabs */
.app-header {
    display: grid;
    grid-template-columns: 45px 1fr;
    grid-template-rows: 30px 19px;
    padding-left: 5px;
}
.app-button {
    grid-row: 1 / 3;
    align-self: start;
    width: 40px;
    height: 40px;
    margin-top: 4px;
    background: linear-gradient(#d0d0d2, #8e8e91);
    border: 1px solid #111;
}
.app-button svg {
    width: 38px;
    height: 38px;
}
.title-bar, .quick-access, .account, .window-buttons, .search, .window-title {
    display: flex;
    align-items: center;
}
.quick-access button {
    width: 24px;
    height: 24px;
}
.quick-access .slim {
    width: 12px;
}
.quick-access .slim.dim {
    opacity: 0.6;
}
.quick-access .slim:last-child {
    width: 18px;
}
.window-title {
    margin: 0 auto;
    gap: 12px;
    line-height: 28px;
    align-self: flex-start;
}
.search .tiny {
    width: 12px;
}
.search input {
    width: 178px;
    height: 20px;
    padding: 0 2px;
    background-color: #454f5f;
    font-size: 11px;
    font-style: italic;
}
.search input::placeholder {
    color: #a6adb8;
    opacity: 1;
}
.search button {
    width: 25px;
}
.account {
    gap: 6px;
    padding-left: 2px;
}
.account button {
    height: 24px;
    gap: 4px;
}
.divider {
    width: 1px;
    height: 18px;
    margin-left: 3px;
    background-color: #4d5563;
}
.account .help {
    margin-left: 5px;
    gap: 10px;
}
.help-mark {
    width: 14px;
    height: 14px;
    line-height: 14px;
    border-radius: 50%;
    background-color: #f2f6ff;
    color: #1e4fa8;
    font-weight: 700;
}
.window-buttons {
    margin-left: 61px;
    padding-right: 4px;
}
.window-buttons button {
    width: 25px;
    height: 24px;
}
.ribbon-tabs {
    grid-column: 2;
    display: flex;
    color: #b3b8c0;
}
.ribbon-tabs a {
    padding: 0 8px;
    height: 19px;
    line-height: 18px;
}
.ribbon-tabs .active {
    background-color: #3b4453;
    color: #eceef1;
}
.ribbon-tabs button {
    gap: 6px;
    margin-left: 20px;
}
.fold {
    width: 13px;
    height: 7px;
    border-radius: 2px;
    background-color: #eceef1;
    display: flex;
    align-items: center;
    justify-content: center;
}
.fold::after {
    content: "";
    border: 3px solid transparent;
    border-top: none;
    border-bottom-color: #222933;
}

/* Ribbon */
.ribbon {
    display: grid;
    grid-template-columns: 260fr 132fr 139fr 270fr 85fr 242fr 74fr 105fr 99fr 69fr;
    gap: 1px;
    margin: 0 8px 0 6px;
    height: 97px;
    flex: none;
}
.panel {
    display: flex;
    flex-direction: column;
    background-color: #3b4453;
    min-width: 0;
}
.panel-body {
    flex: 1;
    display: flex;
    gap: 5px;
    padding: 4px 0 0 5px;
}
.big {
    flex-direction: column;
    justify-content: flex-start;
    line-height: 15px;
    min-width: 42px;
    padding-top: 3px;
}
.big svg {
    width: 32px;
    height: 32px;
    margin-bottom: 3px;
    overflow: visible;
}
.big .caret {
    margin-top: 3px;
}
.big-letter {
    font-size: 116px;
    text-anchor: middle;
    fill: #dfe1e5;
}
.smalls {
    display: grid;
    grid-auto-rows: 24px;
    align-content: start;
    justify-content: start;
}
.smalls button {
    justify-content: flex-start;
    padding: 0 2px;
    gap: 5px;
}
.smalls.four {
    grid-template-columns: 30px 29px 41px 22px;
}
.smalls.five {
    grid-template-columns: repeat(5, 24px);
}
.draw {
    gap: 3px;
}
.edit {
    padding-left: 3px;
}
.annot {
    padding-left: 7px;
    gap: 6px;
}
.layers {
    padding-left: 4px;
    gap: 3px;
}
.layer-tools {
    flex: 1;
    padding: 1px 2px 0 0;
}
.combo {
    display: flex;
    align-items: center;
    flex: 1;
    min-width: 0;
    height: 22px;
    padding-right: 2px;
    background-color: #4b586b;
    border: 1px solid #2a323e;
}
.combo select {
    appearance: none;
    flex: 1;
    min-width: 0;
    height: 18px;
    overflow: hidden;
}
.layer-combo {
    padding-left: 2px;
    gap: 1px;
    margin-bottom: 1px;
}
.swatch {
    width: 14px;
    height: 14px;
    margin: 0 4px;
    background-color: #000;
    flex: none;
}
.blocks, .groups {
    padding-left: 3px;
    gap: 3px;
}
.props {
    gap: 2px;
    padding-right: 2px;
}
.prop-rows {
    flex: 1;
    display: flex;
    flex-direction: column;
    gap: 2px;
    min-width: 0;
    padding-top: 1px;
}
.prop-row {
    display: flex;
    align-items: center;
    gap: 2px;
}
.color-combo .swatch {
    width: 16px;
    height: 16px;
    margin: 0 10px 0 11px;
    border: 1px solid #9aa0aa;
}
.line-combo .line {
    width: 64px;
    height: 1px;
    margin: 0 2px;
    background-color: #fff;
    flex: none;
}
.line-combo .line.thick {
    height: 3px;
}
.utils {
    padding-left: 12px;
    gap: 12px;
}
.clip {
    padding-left: 12px;
    gap: 12px;
}
.view {
    justify-content: center;
    padding-left: 0;
}
.panel-title {
    display: flex;
    align-items: center;
    justify-content: center;
    height: 19px;
    padding: 0 4px;
}
.panel-title button {
    flex: 1;
    gap: 6px;
}
.panel-title .launcher {
    flex: none;
}
.launcher svg {
    width: 7px;
    height: 7px;
}

/* Drawing file tabs */
.file-tabs {
    display: flex;
    align-items: flex-end;
    flex: none;
    height: 31px;
    margin: 0 4px;
    padding: 0 16px;
    border-bottom: 4px solid #3b4453;
    color: #a9afb8;
}
.file-tab {
    display: flex;
    align-items: center;
    justify-content: space-between;
    width: 130px;
    height: 21px;
    margin-right: -7px;
    padding: 0 14px 0 16px;
    background-color: #2d3541;
    clip-path: polygon(0 100%, 4px 80%, 8px 12%, 12px 0, 118px 0, 122px 12%, 126px 80%, 130px 100%);
}
.file-tab.active {
    background-color: #3b4453;
    color: #f2f3f5;
}
.file-tabs svg, .layout-tabs svg {
    width: 10px;
    height: 10px;
    stroke: #a9afb8;
    stroke-width: 6;
}
.add-tab {
    width: 22px;
    height: 15px;
    margin: 0 0 3px 13px;
    border-radius: 4px 8px 4px 8px;
    background-color: #323a46;
}

/* Model space */
.viewport {
    position: relative;
    flex: 1;
    min-height: 0;
    margin: 0 4px;
    background-color: #d6d8dc;
    color: #000;
    box-shadow: 0 0 0 4px #2e3b49;
    clip-path: inset(0 -4px);
    overflow: hidden;
}
.model {
    width: 100%;
    height: 100%;
}
.frame {
    fill: none;
    stroke: #3f3cd8;
    stroke-width: 4;
}
.k3, .k4, .k5, .k6, .k8, .k12 {
    fill: none;
    stroke: #000;
}
.k3 { stroke-width: 3; }
.k4 { stroke-width: 4; }
.k5 { stroke-width: 5; }
.k6 { stroke-width: 6; }
.k8 { stroke-width: 8; }
.k12 { stroke-width: 12; }
.bg { fill: #d6d8dc; }
.view-labels {
    position: absolute;
    top: 6px;
    left: 3px;
    display: flex;
}
.view-window-buttons {
    position: absolute;
    top: 8px;
    right: 9px;
    display: flex;
    gap: 6px;
}
.view-window-buttons svg {
    width: 14px;
    height: 14px;
    fill: #eef0f2;
    stroke: #4f5358;
    stroke-width: 4;
}
.view-cube {
    position: absolute;
    top: 34px;
    right: 19px;
    display: flex;
    flex-direction: column;
    align-items: center;
    gap: 18px;
}
.view-cube > svg {
    width: 128px;
    height: 140px;
    overflow: visible;
}
.view-cube text {
    text-anchor: middle;
}
.face {
    font-size: 13px;
    fill: #84878c;
}
.side {
    font-size: 19px;
    fill: #dfe0e3;
    stroke: #a3a5a9;
    stroke-width: 1;
}
.ucs-menu {
    height: 18px;
    padding: 0 4px;
    gap: 6px;
    border-radius: 3px;
    background-color: #dddfe8;
    color: #85888e;
    font-size: 11px;
}
.ucs-menu svg {
    width: 10px;
    height: 6px;
    fill: none;
    stroke: #a3a6ac;
    stroke-width: 3;
}
.nav-bar {
    position: absolute;
    top: 234px;
    right: 3px;
    width: 35px;
    height: 216px;
    display: flex;
    flex-direction: column;
    align-items: center;
    gap: 6px;
    padding: 2px 4px;
    border: 2px solid #a9abae;
    border-bottom-color: rgba(169, 171, 174, 0.4);
    border-radius: 6px;
    background-color: rgba(222, 223, 226, 0.6);
}
.nav-bar svg {
    width: 24px;
    height: 24px;
    fill: none;
    stroke: #c0c2c6;
    stroke-width: 3;
}
.nav-bar .nav-close {
    align-self: flex-end;
    width: 8px;
    height: 8px;
}
.nav-bar .caret {
    border-top-color: #b4b6b9;
}
.nav-bar .pan {
    border-top: 1px solid #bdbfc2;
    padding-top: 3px;
}
.ucs-icon {
    position: absolute;
    left: 15px;
    bottom: 15px;
    width: 72px;
    height: 72px;
    overflow: visible;
    fill: none;
    stroke: #111;
}
.crosshair {
    position: absolute;
    left: 900px;
    top: 707px;
    width: 98px;
    height: 98px;
    fill: none;
    stroke: #111;
}

/* Status bar */
.status {
    display: flex;
    justify-content: space-between;
    flex: none;
    height: 29px;
    padding: 0 6px 2px 16px;
}
.layout-tabs {
    display: flex;
    height: 18px;
    color: #a9afb8;
}
.layout-tabs a {
    padding: 0 11px;
    margin-right: -1px;
    background-color: #2d3541;
    line-height: 18px;
    clip-path: polygon(0 0, 100% 0, calc(100% - 6px) 85%, calc(100% - 10px) 100%, 10px 100%, 6px 85%);
}
.layout-tabs .active {
    background-color: #3b4453;
    color: #fff;
    font-weight: 700;
}
.layout-tabs button {
    width: 22px;
    height: 16px;
    margin-left: 4px;
    border-radius: 8px 2px 8px 4px;
    background-color: #2d3541;
}
.status-tools {
    display: flex;
    align-items: center;
    gap: 2px;
}
.seg {
    display: flex;
    height: 24px;
    background-color: #343d4a;
}
.seg button {
    width: 24px;
    height: 24px;
}
.seg .drop {
    width: 15px;
}
.seg .on {
    background-color: #5b8fcb;
    border: 1px solid #343d4a;
}
.seg .space {
    width: 56px;
}
.seg .scale {
    width: 33px;
    gap: 4px;
}
```
